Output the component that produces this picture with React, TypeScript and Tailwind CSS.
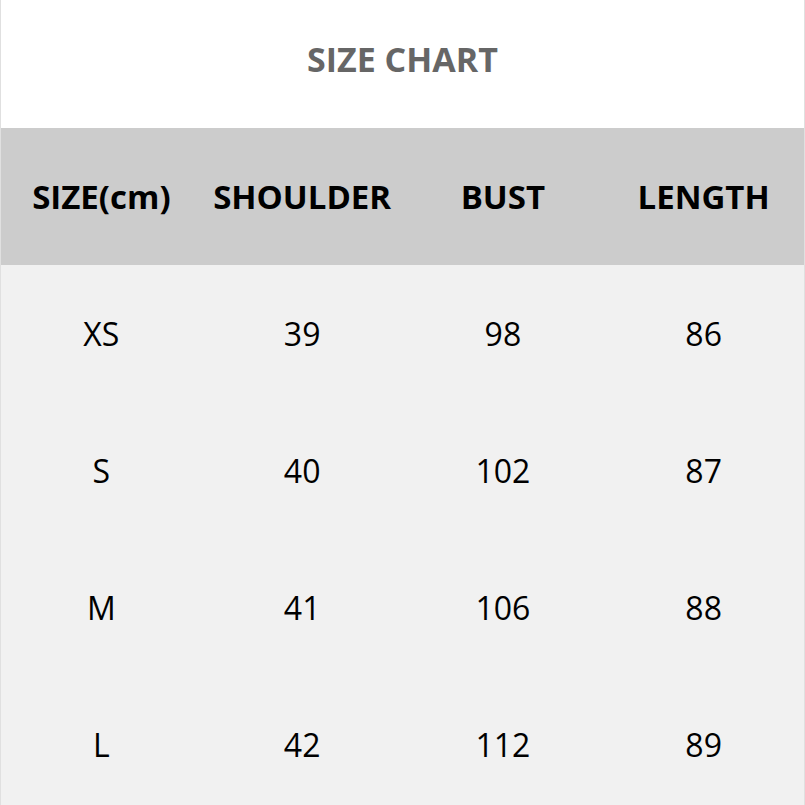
const headers = ['SIZE(cm)', 'SHOULDER', 'BUST', 'LENGTH'];

const rows = [
  ['XS', '39', '98', '86'],
  ['S', '40', '102', '87'],
  ['M', '41', '106', '88'],
  ['L', '42', '112', '89'],
];

export default function App() {
  return (
    <div className="w-[805px] h-[805px] overflow-hidden bg-white border-x border-[#e0e0e0] font-['Open_Sans',sans-serif]">
      <div className="h-[128px] flex items-center justify-center pb-[10px]">
        <h1 className="text-[34px] font-bold text-[#666666] leading-none">SIZE CHART</h1>
      </div>

      <div className="grid grid-cols-4 h-[137px] bg-[#cccccc] items-center">
        {headers.map((h) => (
          <div key={h} className="text-center text-[33px] font-bold text-black">
            {h}
          </div>
        ))}
      </div>

      <div className="bg-[#f1f1f1]">
        {rows.map((r) => (
          <div key={r[0]} className="grid grid-cols-4 h-[137px] items-center">
            {r.map((c, i) => (
              <div key={i} className="text-center text-[32px] text-black">
                {c}
              </div>
            ))}
          </div>
        ))}
      </div>
    </div>
  );
}
